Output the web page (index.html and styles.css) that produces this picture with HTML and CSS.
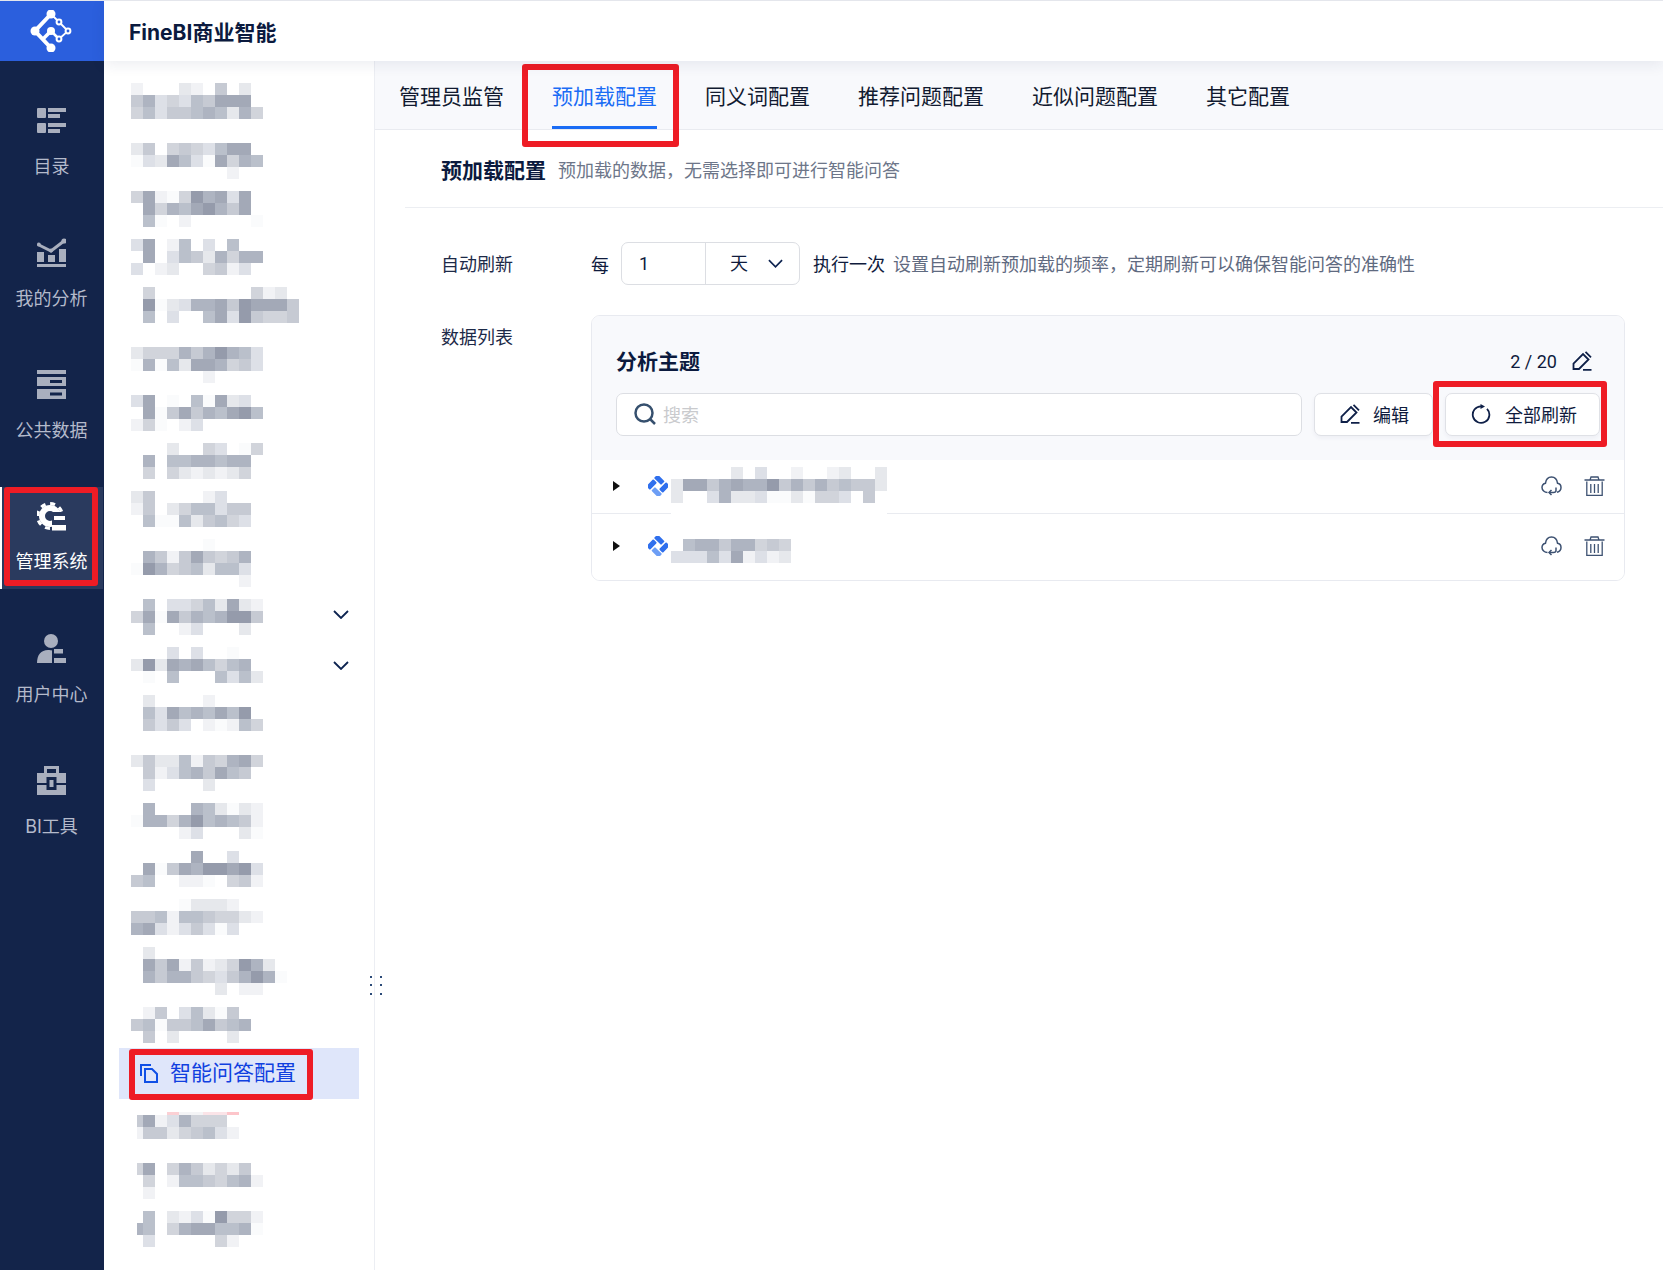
FILE: index.html
```html
<!DOCTYPE html>
<html lang="zh-CN">
<head>
<meta charset="utf-8">
<title>FineBI商业智能</title>
<link rel="stylesheet" href="styles.css">
</head>
<body>
<div class="app">
  <aside class="rail">
    <div class="logo">
      <svg class="logo-mark" viewBox="0 0 42 42">
        <g fill="none" stroke="#fff" stroke-width="4">
          <path d="M21 4 5 21l16 17"/>
          <path d="M21 21l-8 8" stroke-width="3.500"/>
          <path d="M21 21l8 8" stroke-width="2.500"/>
          <path d="M21 4l8 8 9 9-9 8" stroke-width="1.800"/>
        </g>
        <g fill="#2b5fdd" stroke="#fff" stroke-width="2">
          <circle cx="29" cy="12" r="2.400"/>
          <circle cx="38" cy="21" r="2.400"/>
          <circle cx="29" cy="29" r="2.400"/>
        </g>
        <g fill="#fff">
          <circle cx="21" cy="4" r="4.500"/>
          <circle cx="5" cy="21" r="4.500"/>
          <circle cx="21" cy="38" r="4.500"/>
          <circle cx="21" cy="21" r="4"/>
        </g>
      </svg>
    </div>
    <nav class="rail-nav">
      <a class="rail-item">
        <svg class="rail-icon" viewBox="0 0 29 25"><rect width="9" height="10" rx="1"/><rect x="11" width="18" height="4"/><rect x="11" y="6" width="12" height="4"/><rect y="15" width="9" height="10" rx="1"/><rect x="11" y="15" width="18" height="4"/><rect x="11" y="21" width="12" height="4"/></svg>
        <span>目录</span>
      </a>
      <a class="rail-item">
        <svg class="rail-icon" viewBox="0 0 29 29"><rect y="14" width="7" height="10"/><rect x="11" y="17" width="7" height="7"/><rect x="22" y="11" width="7" height="13"/><rect y="26" width="29" height="3"/><path class="rail-stroke" d="M2 7l12 6L27 3"/><circle cx="1.800" cy="6.500" r="2"/><circle cx="27" cy="3" r="2.600"/><circle cx="14" cy="12.500" r="2"/></svg>
        <span>我的分析</span>
      </a>
      <a class="rail-item">
        <svg class="rail-icon" viewBox="0 0 29 29"><rect width="29" height="4"/><rect y="7" width="29" height="9"/><rect class="slot" x="13" y="10" width="12" height="3"/><rect y="19" width="29" height="10"/><rect class="slot" x="13" y="22.500" width="12" height="3"/></svg>
        <span>公共数据</span>
      </a>
      <a class="rail-item active">
        <svg class="rail-icon" viewBox="0 0 29 29"><circle cx="13" cy="14" r="8" fill="none" stroke="#fff" stroke-width="6"/><circle cx="13" cy="14" r="12.400" fill="none" stroke="#fff" stroke-width="3.200" stroke-dasharray="5 4.700"/><rect class="cut" x="15" y="10" width="14" height="19"/><rect x="17" y="14" width="11" height="4"/><rect x="15" y="23" width="14" height="5.500"/></svg>
        <span>管理系统</span>
        <i class="mark mark-rail"></i>
      </a>
      <a class="rail-item">
        <svg class="rail-icon" viewBox="0 0 29 29"><circle cx="14" cy="7" r="7"/><path d="M0 29c0-8 4-13 11-13 2 0 3 .2 4 .6V29z"/><rect x="17" y="15" width="9" height="4.500"/><rect x="17" y="24" width="12" height="5"/></svg>
        <span>用户中心</span>
      </a>
      <a class="rail-item">
        <svg class="rail-icon" viewBox="0 0 29 29"><path class="rail-stroke" d="M8.500 8V1.500h12V8"/><rect y="7" width="29" height="10"/><rect y="19" width="29" height="10"/><rect class="slot" x="9.500" y="11" width="10" height="13"/><rect x="12.500" y="14" width="4" height="7"/></svg>
        <span>BI工具</span>
      </a>
    </nav>
  </aside>

  <div class="workspace">
    <header class="topbar">FineBI商业智能</header>
    <div class="content">
      <aside class="tree">
        <div class="tree-row tall"><div class="mosaic" data-m="1...21.5.2.|5734365888.|46355676274"></div></div>
        <div class="tree-row"><div class="mosaic" data-m="25.4543688.|03286308476|........1.."></div></div>
        <div class="tree-row"><div class="mosaic" data-m="4810497838|.847689758|.60.1.....0"></div></div>
        <div class="tree-row"><div class="mosaic" data-m="38.16.3.6..|.8.36527477|3.12..4513."></div></div>
        <div class="tree-row tall"><div class="mosaic" data-m=".4........412|.9023778598885|.6.3..68395445"></div></div>
        <div class="tree-row"><div class="mosaic" data-m="24447579763|07062887453|......1...."></div></div>
        <div class="tree-row"><div class="mosaic" data-m="38.0.60823|.8058576896|140.13"></div></div>
        <div class="tree-row"><div class="mosaic" data-m="...2..43.04|.7.6677677|.4.4212124"></div></div>
        <div class="tree-row"><div class="mosaic" data-m="25....13|15.2466355|.600625643"></div></div>
        <div class="tree-row tall"><div class="mosaic" data-m="......0|.751585457|0974562663|.........1"></div></div>
        <div class="tree-row"><div class="mosaic" data-m=".6.33462821|48085767995|.6..13...2"></div>
          <svg class="chev" viewBox="0 0 16 9"><path d="M1 1l7 7 7-7"/></svg></div>
        <div class="tree-row"><div class="mosaic" data-m="...3.3..0|2928786467|.0.6...6362"></div>
          <svg class="chev lower" viewBox="0 0 16 9"><path d="M1 1l7 7 7-7"/></svg></div>
        <div class="tree-row tall"><div class="mosaic" data-m=".2....1|.638676869|.5353.10164"></div></div>
        <div class="tree-row"><div class="mosaic" data-m="25226154784|.513675865|.3....2"></div></div>
        <div class="tree-row"><div class="mosaic" data-m=".7...762021|07747967651|....13...20"></div></div>
        <div class="tree-row"><div class="mosaic" data-m=".....8..3|.8058799893|56..110.451"></div></div>
        <div class="tree-row"><div class="mosaic" data-m="....02221|55616654421|783135303"></div></div>
        <div class="tree-row tall"><div class="mosaic" data-m=".2|.85815124972|.757754357970|.......2.11"></div></div>
        <div class="tree-row short"><div class="mosaic" data-m=".15.36205|5605568567|.5.2....2"></div></div>
        <div class="tree-selected">
          <svg class="doc-icon" viewBox="0 0 18 19"><path d="M1 12V1h10"/><path d="M5 5h7l5 5v8H5z"/></svg>
          <span>智能问答配置</span>
          <i class="mark mark-tree"></i>
        </div>
        <div class="tree-sliver"></div>
        <div class="tree-row"><div class="mosaic clipped" data-m="58137444|155245631"></div></div>
        <div class="tree-row"><div class="mosaic clipped" data-m="48.4752425|.4.16654671|.1"></div></div>
        <div class="tree-row"><div class="mosaic clipped" data-m=".6.21309441|76.47886670|.3.....41"></div></div>
        <svg class="grip" viewBox="0 0 12 20"><g fill="#2b4a78"><rect width="2" height="2"/><rect x="10" width="2" height="2"/><rect y="8" width="2" height="2"/><rect x="10" y="8" width="2" height="2"/><rect y="17" width="2" height="2"/><rect x="10" y="17" width="2" height="2"/></g></svg>
      </aside>

      <main class="main">
        <div class="tabs">
          <a class="tab">管理员监管</a>
          <a class="tab active">预加载配置<i class="mark mark-tab"></i></a>
          <a class="tab">同义词配置</a>
          <a class="tab">推荐问题配置</a>
          <a class="tab">近似问题配置</a>
          <a class="tab">其它配置</a>
        </div>
        <section class="config">
          <div class="config-head">
            <h1>预加载配置</h1>
            <p>预加载的数据，无需选择即可进行智能问答</p>
          </div>
          <div class="form-row refresh-row">
            <label class="form-label">自动刷新</label>
            <div class="freq">
              <span>每</span>
              <div class="freq-box">
                <span class="freq-num">1</span>
                <span class="freq-unit">天<svg class="unit-chev" viewBox="0 0 16 9"><path d="M1 1l7 7 7-7"/></svg></span>
              </div>
              <span class="freq-run">执行一次</span>
              <span class="freq-hint">设置自动刷新预加载的频率，定期刷新可以确保智能问答的准确性</span>
            </div>
          </div>
          <div class="form-row list-row">
            <label class="form-label list-label">数据列表</label>
            <div class="panel">
              <div class="panel-head">
                <div class="panel-title-row">
                  <h2>分析主题</h2>
                  <div class="panel-count">
                    <span>2 / 20</span>
                    <svg class="pencil" viewBox="0 0 20 20"><path d="M1.500 18v-5.500L11 3l5.500 5.500L7 18z"/><path d="M13.500 .8l5.500 5.500"/><path d="M11 18.800h8.500"/></svg>
                  </div>
                </div>
                <div class="toolbar">
                  <div class="search">
                    <svg class="search-icon" viewBox="0 0 22 22"><circle cx="10" cy="10" r="8.500"/><path d="M16 16l5 5"/></svg>
                    <span>搜索</span>
                  </div>
                  <button class="btn edit-btn">
                    <svg class="pencil" viewBox="0 0 20 20"><path d="M1.500 18v-5.500L11 3l5.500 5.500L7 18z"/><path d="M13.500 .8l5.500 5.500"/><path d="M11 18.800h8.500"/></svg>
                    编辑
                  </button>
                  <button class="btn refresh-btn">
                    <svg class="refresh-icon" viewBox="0 0 20 20"><path d="M16 4.800A8.300 8.300 0 1 1 10 2.300"/><path class="refresh-head" d="M9.500 0l4.500 2.500-4.500 2.500z"/></svg>
                    全部刷新
                    <i class="mark mark-btn"></i>
                  </button>
                </div>
              </div>
              <div class="item first">
                <i class="caret"></i>
                <svg class="theme-icon" viewBox="0 0 20 20"><g transform="rotate(45 10 10)"><rect class="ti-a" x="1.500" y="2" width="10" height="5.200" rx="1"/><rect class="ti-a" x="13" y="1.500" width="5.200" height="10" rx="1"/><rect class="ti-b" x="8.500" y="12.800" width="10" height="5.200" rx="1"/><rect class="ti-a" x="1.800" y="8.500" width="5.200" height="10" rx="1"/></g></svg>
                <div class="mosaic item-name" data-m=".....2.3..1..12..2|288578779575756552|2..372230020443.5|wwwwwwwwwwwwwwwwww"></div>
                <div class="item-actions">
                  <svg class="cloud" viewBox="0 0 21 20"><path d="M6.500 16.500C3.500 16.500 1 14.200 1 11.500 1 9 3 7.500 4.500 7.200 5 3.500 7.500 1 10.500 1c3 0 5.500 2.500 6 6.200 2 .3 3.500 2.300 3.500 4.300 0 2.500-2 4.200-4 4.700"/><path d="M15 11.500v3q0 2-2.500 2H8"/><path d="M10.500 14L8 16.500l2.500 2.500"/></svg>
                  <svg class="trash" viewBox="0 0 21 20"><path d="M.5 4h20M6 4l1-3h7l1 3M2.800 5.500v13.800h15.400V5.500M6.800 8v9M10.500 8v9M14.200 8v9"/></svg>
                </div>
              </div>
              <div class="item second">
                <i class="caret"></i>
                <svg class="theme-icon" viewBox="0 0 20 20"><g transform="rotate(45 10 10)"><rect class="ti-a" x="1.500" y="2" width="10" height="5.200" rx="1"/><rect class="ti-a" x="13" y="1.500" width="5.200" height="10" rx="1"/><rect class="ti-b" x="8.500" y="12.800" width="10" height="5.200" rx="1"/><rect class="ti-a" x="1.800" y="8.500" width="5.200" height="10" rx="1"/></g></svg>
                <div class="mosaic item-name" data-m=".677577454|3336381312"></div>
                <div class="item-actions">
                  <svg class="cloud" viewBox="0 0 21 20"><path d="M6.500 16.500C3.500 16.500 1 14.200 1 11.500 1 9 3 7.500 4.500 7.200 5 3.500 7.500 1 10.500 1c3 0 5.500 2.500 6 6.200 2 .3 3.500 2.300 3.500 4.300 0 2.500-2 4.200-4 4.700"/><path d="M15 11.500v3q0 2-2.500 2H8"/><path d="M10.500 14L8 16.500l2.500 2.500"/></svg>
                  <svg class="trash" viewBox="0 0 21 20"><path d="M.5 4h20M6 4l1-3h7l1 3M2.800 5.500v13.800h15.400V5.500M6.800 8v9M10.500 8v9M14.200 8v9"/></svg>
                </div>
              </div>
            </div>
          </div>
        </section>
      </main>
    </div>
  </div>
</div>
<script src="mosaic.js"></script>
</body>
</html>
```
FILE: styles.css
```css
* { box-sizing: border-box; }
html, body { margin: 0; height: 100%; }
body {
  overflow: hidden;
  background: #fff;
  border-top: 1px solid #e4e6ec;
  color: #0f1b3d;
  font-family: Inter, "Noto Sans CJK SC", sans-serif;
  font-size: 18px;
}
h1, h2, p { margin: 0; }
a { display: block; }

.app { display: flex; height: 1269px; }

/* left rail */
.rail { width: 104px; flex: none; background: #13244a; }
.logo {
  height: 60px;
  background: #2b5fdd;
  display: flex;
  align-items: center;
  justify-content: center;
}
.logo-mark { width: 42px; height: 42px; margin-right: 2px; }
.rail-nav { display: flex; flex-direction: column; gap: 30px; margin-top: 30px; }
.rail-item {
  position: relative;
  height: 102px;
  padding: 15px 1px 0 0;
  display: flex;
  flex-direction: column;
  align-items: center;
  color: #b4bacb;
  line-height: 24px;
}
.rail-item span { margin-top: 20px; }
.rail-icon { width: 29px; height: 29px; fill: #a9afbe; }
.rail-stroke { fill: none; stroke: #a9afbe; stroke-width: 3; }
.slot { fill: #13244a; }
.rail-item.active {
  background: #2a3a5e;
  border-left: 2px solid #fff;
  margin-right: 1px;
  padding-right: 2px;
  color: #fff;
}
.rail-item.active span { margin-top: 19px; }
.rail-item.active .rail-icon { fill: #fff; }
.cut { fill: #2a3a5e; }

/* red annotation boxes */
.mark {
  position: absolute;
  border: 6px solid #ee1c25;
  border-radius: 3px;
  pointer-events: none;
}
.mark-rail { left: 2px; top: 0; width: 94px; height: 99px; }
.mark-tree { left: 10px; top: 1px; width: 184px; height: 51px; }
.mark-tab { left: -6px; top: 3px; width: 157px; height: 83px; }
.mark-btn { left: -13px; top: -13px; width: 174px; height: 66px; }

/* top bar + content */
.workspace { flex: 1; min-width: 0; display: flex; flex-direction: column; }
.topbar {
  position: relative;
  z-index: 2;
  height: 60px;
  flex: none;
  padding-left: 25px;
  background: #fff;
  box-shadow: 0 3px 14px rgba(30, 45, 90, 0.09);
  font-size: 21px;
  font-weight: 700;
  line-height: 64px;
  color: #0b1a3e;
}
.content { flex: 1; display: flex; min-height: 0; }

/* tree */
.tree {
  position: relative;
  width: 271px;
  flex: none;
  padding-top: 22px;
  border-right: 1px solid #eceef3;
}
.tree-row {
  display: flex;
  align-items: flex-start;
  height: 48px;
  padding-left: 27px;
  padding-right: 25px;
}
.tree-row.tall { height: 60px; }
.tree-row.short { height: 41px; }
.chev {
  width: 16px;
  height: 9px;
  margin-left: auto;
  margin-top: 11px;
  fill: none;
  stroke: #0d2350;
  stroke-width: 1.800;
}
.chev.lower { margin-top: 14px; }
.tree-selected {
  position: relative;
  display: flex;
  align-items: center;
  width: 240px;
  height: 51px;
  margin-left: 15px;
  padding: 0 0 5px 21px;
  background: #dfe6fa;
  color: #1040e0;
  font-size: 21px;
}
.doc-icon {
  width: 18px;
  height: 19px;
  margin: 5px 12px 0 0;
  fill: none;
  stroke: #1050e6;
  stroke-width: 2;
}
.tree-sliver {
  width: 72px;
  height: 3px;
  margin: 13px 0 0 63px;
  background: linear-gradient(90deg, #fbd0d4 0 12px, #f4f4f6 12px 36px, #fbe4e8 36px 60px, #fdc5ca 60px);
}
.grip {
  position: absolute;
  top: 915px;
  right: -8px;
  width: 12px;
  height: 20px;
}

/* pixelated (redacted) labels */
.mosaic { flex: none; }
.mosaic.clipped { clip-path: inset(0 0 0 6px); }
.m-row { display: flex; height: 12px; }
.m-row span { width: 12px; height: 12px; flex: none; }
.lw { background: #fff; }
.l0 { background: #fafbfc; }
.l1 { background: #f1f2f5; }
.l2 { background: #e6e8ec; }
.l3 { background: #dde0e7; }
.l4 { background: #d1d4db; }
.l5 { background: #c6cad3; }
.l6 { background: #bac0cb; }
.l7 { background: #aeb4c1; }
.l8 { background: #a3a9b7; }
.l9 { background: #959bab; }

/* main */
.main { flex: 1; min-width: 0; }
.tabs {
  display: flex;
  height: 69px;
  background: #f8f9fc;
  border-bottom: 1px solid #e9ebf0;
}
.tab {
  position: relative;
  padding: 21px 24px 0;
  font-size: 21px;
  line-height: 30px;
  color: #111a30;
}
.tab.active { color: #1a6cf5; }
.tab.active::after {
  content: "";
  position: absolute;
  left: 24px;
  right: 24px;
  bottom: 0;
  height: 3px;
  background: #1a6cf5;
}
.config { display: flex; flex-direction: column; }
.config-head {
  display: flex;
  align-items: center;
  height: 78px;
  margin-left: 30px;
  padding-left: 36px;
  border-bottom: 1px solid #eceef2;
}
.config-head h1 { font-size: 21px; font-weight: 700; color: #0b1a3e; }
.config-head p { margin-left: 12px; color: #6d7689; }

.form-row { display: flex; padding-left: 66px; }
.form-label { width: 150px; flex: none; color: #1d2a48; line-height: 30px; }
.refresh-row { align-items: center; margin-top: 34px; height: 43px; }
.refresh-row .form-label { padding-top: 2px; }
.freq { display: flex; align-items: center; }
.freq-box {
  display: flex;
  width: 179px;
  height: 43px;
  margin-left: 12px;
  background: #fff;
  border: 1px solid #dcdee3;
  border-radius: 7px;
  line-height: 42px;
}
.freq-num {
  width: 84px;
  padding-left: 17px;
  border-right: 1px solid #dcdee3;
  font-family: Roboto, sans-serif;
}
.freq-unit { display: flex; align-items: center; padding-left: 24px; }
.unit-chev {
  width: 15px;
  height: 9px;
  margin-left: 20px;
  fill: none;
  stroke: #0d2350;
  stroke-width: 1.800;
}
.freq-run { margin: 0 0 2px 13px; }
.freq-hint { margin: 0 0 2px 8px; color: #5f6a80; }

.list-row { margin-top: 30px; }
.list-label { padding-top: 8px; }
.panel {
  width: 1034px;
  height: 266px;
  border: 1px solid #e8eaf0;
  border-radius: 9px;
  overflow: hidden;
}
.panel-head { height: 144px; padding: 29px 24px 0; background: #f8f9fc; }
.panel-title-row {
  display: flex;
  align-items: center;
  justify-content: space-between;
  height: 30px;
  padding-right: 8px;
}
.panel-title-row h2 { font-size: 21px; font-weight: 700; color: #0b1a3e; }
.panel-count {
  display: flex;
  align-items: center;
  gap: 15px;
  margin-top: 2px;
  font-family: Roboto, sans-serif;
}
.pencil {
  width: 20px;
  height: 20px;
  fill: none;
  stroke: #0f2048;
  stroke-width: 1.800;
}
.toolbar { display: flex; gap: 12px; height: 43px; margin-top: 18px; }
.search {
  position: relative;
  flex: 1;
  display: flex;
  align-items: center;
  padding: 0 0 2px 17px;
  background: #fff;
  border: 1px solid #dcdee3;
  border-radius: 7px;
  color: #c9cacd;
}
.search-icon {
  width: 22px;
  height: 22px;
  margin-right: 7px;
  fill: none;
  stroke: #36506e;
  stroke-width: 2.500;
}
.btn {
  position: relative;
  display: flex;
  align-items: center;
  background: #fff;
  border: 1px solid #dfe1e6;
  border-radius: 7px;
  box-shadow: 0 2px 4px rgba(30, 45, 90, 0.05);
  font: inherit;
  color: #0f1b3d;
  padding: 0 0 2px;
}
.edit-btn { width: 119px; padding-left: 25px; gap: 13px; }
.refresh-btn { width: 155px; padding-left: 25px; gap: 14px; }
.refresh-icon {
  width: 20px;
  height: 20px;
  fill: none;
  stroke: #0f2048;
  stroke-width: 1.800;
}
.refresh-head { fill: #0f2048; stroke: none; }

.item { position: relative; display: flex; padding-left: 21px; background: #fff; }
.item.first { height: 54px; border-bottom: 1px solid #e9ebf0; }
.item.second { height: 66px; }
.caret {
  flex: none;
  width: 0;
  height: 0;
  margin-top: 21px;
  border-left: 7px solid #111;
  border-top: 5.500px solid transparent;
  border-bottom: 5.500px solid transparent;
}
.second .caret { margin-top: 27px; }
.theme-icon { flex: none; width: 20px; height: 20px; margin: 16px 0 0 28px; }
.second .theme-icon { margin-top: 22px; }
.ti-a { fill: #2f6fed; }
.ti-b { fill: #6d9ef5; }
.item-name { margin: 7px 0 0 3px; position: relative; z-index: 1; }
.second .item-name { margin-top: 25px; }
.item-actions {
  position: absolute;
  top: 16px;
  right: 19px;
  display: flex;
  gap: 22px;
}
.second .item-actions { top: 22px; }
.cloud, .trash {
  width: 21px;
  height: 20px;
  fill: none;
  stroke: #3e5272;
  stroke-width: 1.500;
}
.trash { stroke-width: 1.300; }
```
FILE: mosaic.js
```js
// Expands the compact "data-m" strings into rows of pixelated cells.
document.querySelectorAll('.mosaic').forEach(function (block) {
  block.dataset.m.split('|').forEach(function (rowData) {
    var row = document.createElement('div');
    row.className = 'm-row';
    rowData.split('').forEach(function (ch) {
      var cell = document.createElement('span');
      if (ch !== '.') cell.className = 'l' + ch;
      row.appendChild(cell);
    });
    block.appendChild(row);
  });
});
```
